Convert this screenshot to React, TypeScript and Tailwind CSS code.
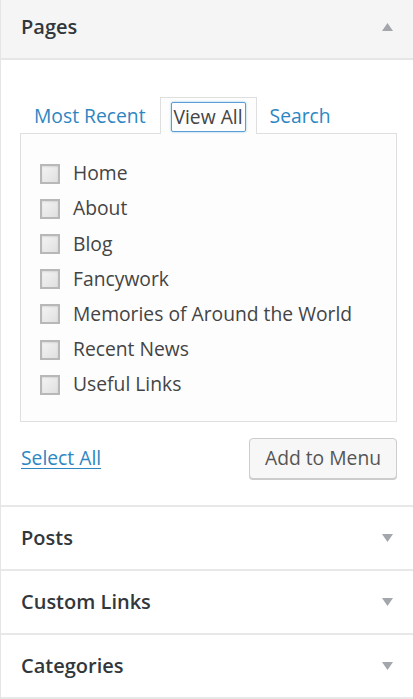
import React from "react";

const pages = [
  "Home",
  "About",
  "Blog",
  "Fancywork",
  "Memories of Around the World",
  "Recent News",
  "Useful Links",
];

const Arrow = ({ up }: { up?: boolean }) => (
  <svg width="11" height="8" viewBox="0 0 11 8" className="mr-[20px]">
    {up ? (
      <polygon points="5.5,0 11,8 0,8" fill="#a3a7ab" />
    ) : (
      <polygon points="0,0 11,0 5.5,8" fill="#a3a7ab" />
    )}
  </svg>
);

const Section = ({ title }: { title: string }) => (
  <div className="flex h-[64px] items-center justify-between border-b-2 border-[#e8e8e8] pl-[20px] pb-px">
    <span className="text-[20px] font-semibold text-[#32373c]">{title}</span>
    <Arrow />
  </div>
);

export default function App() {
  return (
    <div
      className="w-[413px] h-[699px] overflow-hidden bg-white border-l border-[#e5e5e5]"
      style={{ fontFamily: '"Open Sans", "Liberation Sans", sans-serif' }}
    >
      {/* Pages metabox */}
      <div className="flex h-[60px] items-center justify-between border-b-2 border-[#e6e6e6] bg-[#f5f5f5] pl-[20px] pb-[4px]">
        <span className="text-[20px] font-semibold text-[#32373c]">Pages</span>
        <Arrow up />
      </div>

      <div className="pl-[19px] pr-[16px] pt-[37px] pb-[26px] border-b-2 border-[#e8e8e8]">
        <div className="flex items-end text-[19.3px]">
          <div className="flex h-[36px] items-center pl-[14px] pr-[14px] pt-[3px] text-[#2d86c2]">Most Recent</div>
          <div className="relative z-10 -mb-px flex h-[37px] items-center border border-b-0 border-[#dfdfdf] bg-[#fdfdfd] px-[10px] pt-[2px]">
            <span className="flex h-[30px] items-center rounded-[2px] border border-[#5b9dd9] px-[2px] text-[#444] shadow-[0_0_2px_rgba(30,140,190,0.6)]">
              View All
            </span>
          </div>
          <div className="flex h-[36px] items-center px-[13px] pt-[3px] text-[#2d86c2]">Search</div>
        </div>

        <div className="border border-[#dfdfdf] bg-[#fdfdfd] pt-[22px] pb-[19px] pl-[19px]">
          {pages.map((p) => (
            <div key={p} className="flex h-[35.2px] items-center">
              <span className="h-[20px] w-[20px] border-2 border-[#b8b8b8] bg-gradient-to-br from-[#f4f4f4] to-[#e0e0e0] shadow-[inset_0_1px_2px_rgba(0,0,0,0.1)]" />
              <span className="ml-[13px] text-[19.3px] text-[#444]">{p}</span>
            </div>
          ))}
        </div>

        <div className="mt-[16px] flex items-center justify-between">
          <span className="text-[19.3px] text-[#2d86c2] underline underline-offset-[3px] ml-px">Select All</span>
          <button className="h-[41px] w-[148px] rounded-[4px] border border-[#cccccc] bg-[#f7f7f7] text-[19.3px] text-[#555] shadow-[0_1px_0_#cccccc]">
            Add to Menu
          </button>
        </div>
      </div>

      <Section title="Posts" />
      <Section title="Custom Links" />
      <Section title="Categories" />
    </div>
  );
}
